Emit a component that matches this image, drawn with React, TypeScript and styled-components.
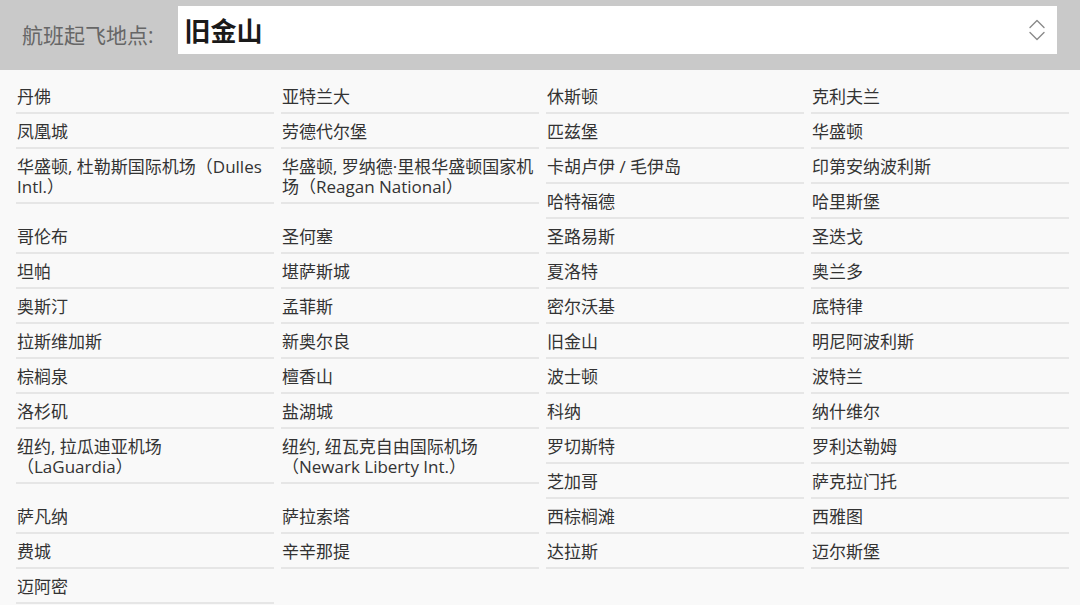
import { createGlobalStyle, styled } from "styled-components";

const GlobalStyle = createGlobalStyle`
    html, body {
        margin: 0;
        padding: 0;
        background: #f9f9f9;
        font-family: "Open Sans", "Noto Sans CJK SC", sans-serif;
    }
`

export const Page = styled.div`
    width: 1080px;
    min-height: 605px;
    background: #f9f9f9;
`

export const Header = styled.div`
    height: 70px;
    box-sizing: border-box;
    padding: 6px 23px 16px 22px;
    background: #c9c9c9;
    display: flex;
    align-items: center;
    gap: 24px;
`

export const Label = styled.span`
    font-size: 21px;
    color: #666;
    padding-top: 8px;
    white-space: nowrap;
`

export const SelectBox = styled.div`
    flex: 1;
    height: 48px;
    background: #fff;
    display: flex;
    align-items: center;
    justify-content: space-between;
    padding: 0 12px 0 7px;
    box-sizing: border-box;
`

export const Value = styled.span`
    font-size: 26px;
    font-weight: 700;
    color: #1a1a1a;
`

export const List = styled.div`
    display: grid;
    grid-template-columns: repeat(4, 1fr);
    grid-auto-rows: 35px;
    column-gap: 7px;
    padding: 9px 11px 0 16px;
`

export const Item = styled.div<{ $tall?: boolean }>`
    grid-row: ${(p) => (p.$tall ? "span 2" : "span 1")};
    align-self: start;
    padding: 8px 0 5px 1px;
    border-bottom: 2px solid #e6e6e6;
    font-size: 17px;
    line-height: 20px;
    color: #333;
    white-space: pre-line;
`

const cities: string[] = [
    "丹佛", "亚特兰大", "休斯顿", "克利夫兰",
    "凤凰城", "劳德代尔堡", "匹兹堡", "华盛顿",
    "华盛顿, 杜勒斯国际机场（Dulles Intl.）", "华盛顿, 罗纳德·里根华盛顿国家机场（Reagan National）", "卡胡卢伊 / 毛伊岛", "印第安纳波利斯",
    "哈特福德", "哈里斯堡",
    "哥伦布", "圣何塞", "圣路易斯", "圣迭戈",
    "坦帕", "堪萨斯城", "夏洛特", "奥兰多",
    "奥斯汀", "孟菲斯", "密尔沃基", "底特律",
    "拉斯维加斯", "新奥尔良", "旧金山", "明尼阿波利斯",
    "棕榈泉", "檀香山", "波士顿", "波特兰",
    "洛杉矶", "盐湖城", "科纳", "纳什维尔",
    "纽约, 拉瓜迪亚机场\n（LaGuardia）", "纽约, 纽瓦克自由国际机场\n（Newark Liberty Int.）", "罗切斯特", "罗利达勒姆",
    "芝加哥", "萨克拉门托",
    "萨凡纳", "萨拉索塔", "西棕榈滩", "西雅图",
    "费城", "辛辛那提", "达拉斯", "迈尔斯堡",
    "迈阿密",
];

function Chevrons() {
    return (
        <svg width="16" height="22" viewBox="0 0 16 22" fill="none" stroke="#8a8a8a" strokeWidth="1.4" strokeLinecap="round" strokeLinejoin="round">
            <polyline points="1,8.5 8,1.5 15,8.5" />
            <polyline points="1,13.5 8,20.5 15,13.5" />
        </svg>
    );
}

export default function App() {
    return (
        <Page>
            <GlobalStyle />
            <Header>
                <Label>航班起飞地点:</Label>
                <SelectBox>
                    <Value>旧金山</Value>
                    <Chevrons />
                </SelectBox>
            </Header>
            <List>
                {cities.map((c) => (
                    <Item key={c} $tall={c.includes("（")}>{c}</Item>
                ))}
            </List>
        </Page>
    );
}
